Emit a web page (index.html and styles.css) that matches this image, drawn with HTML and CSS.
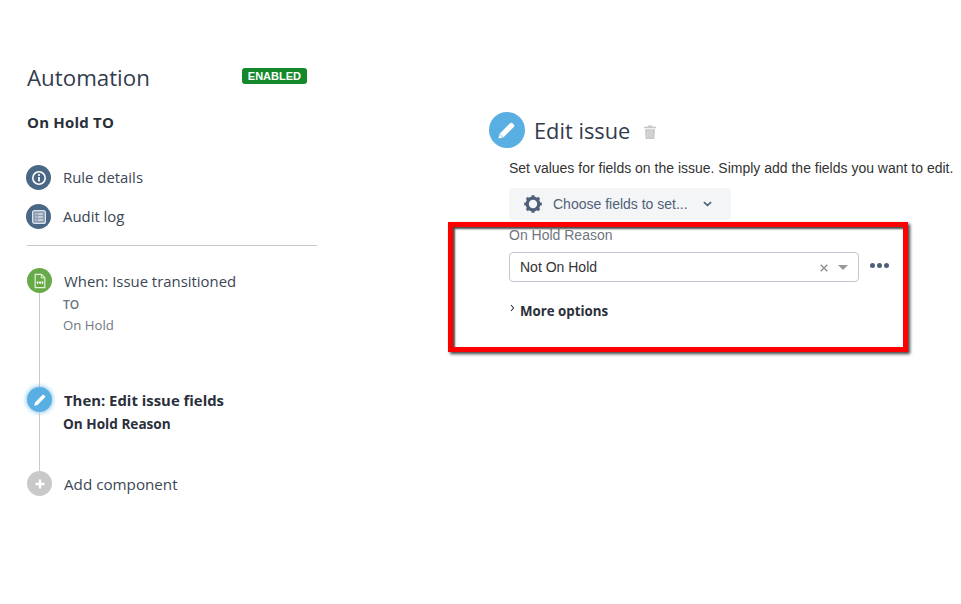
FILE: index.html
```html
<!DOCTYPE html>
<html lang="en">
<head>
<meta charset="utf-8">
<title>Automation</title>
<link rel="stylesheet" href="styles.css">
</head>
<body>
<div class="page">
  <aside class="sidebar">
    <div class="brand">
      <h1 class="title">Automation</h1>
      <span class="badge">ENABLED</span>
    </div>
    <div class="rule-name">On Hold TO</div>
    <nav class="nav">
      <div class="nav-item">
        <span class="circle navy">
          <svg viewBox="0 0 16 16" width="16" height="16"><circle cx="8" cy="8" r="6.2" fill="none" stroke="#fff" stroke-width="1.6"/><rect x="7.1" y="7" width="1.8" height="4.4" fill="#fff"/><circle cx="8" cy="5" r="1.1" fill="#fff"/></svg>
        </span>
        <span class="nav-text">Rule details</span>
      </div>
      <div class="nav-item">
        <span class="circle navy">
          <svg viewBox="0 0 16 16" width="16" height="16"><rect x="1.6" y="1.6" width="12.8" height="12.8" rx="2" fill="#8c9db3" stroke="#dfe5ec" stroke-width="1.2"/><path d="M4.4 5h1.2M4.4 8h1.2M4.4 11h1.2M6.8 5h5M6.8 8h5M6.8 11h5" stroke="#fff" stroke-width="1.1"/></svg>
        </span>
        <span class="nav-text">Audit log</span>
      </div>
    </nav>
    <div class="divider"></div>
    <div class="steps">
      <div class="step step-when">
        <div class="rail">
          <span class="tick"></span>
          <span class="circle green">
            <svg viewBox="0 0 16 16" width="16" height="16"><path d="M3.2 1.4h6.3l3.3 3.3v9.9H3.2z" fill="none" stroke="#e4f1dc" stroke-width="1.2"/><path d="M9.3 1.6v3.3h3.3" fill="none" stroke="#e4f1dc" stroke-width="1"/><path d="M4.6 9.6h2M5.6 8.2v2.8M7 9.6h1.6M8.1 8.2v2.8M9.4 9.6h2M10.4 8.2v2.8" stroke="#fff" stroke-width="1"/></svg>
          </span>
          <span class="line"></span>
        </div>
        <div class="step-body">
          <div class="step-title">When: Issue transitioned</div>
          <div class="sub-label">TO</div>
          <div class="sub-value">On Hold</div>
        </div>
      </div>
      <div class="step step-then">
        <div class="rail">
          <span class="line line-fixed"></span>
          <span class="circle blue glow">
            <svg viewBox="0 0 16 16" width="16" height="16"><path d="M2.2 13.8l.8-3.3 7.4-7.4a1.2 1.2 0 0 1 1.7 0l.8.8a1.2 1.2 0 0 1 0 1.7l-7.4 7.4z" fill="#fff"/></svg>
          </span>
          <span class="line"></span>
        </div>
        <div class="step-body">
          <div class="step-title strong">Then: Edit issue fields</div>
          <div class="sub-strong">On Hold Reason</div>
        </div>
      </div>
      <div class="step step-add">
        <div class="rail">
          <span class="line line-fixed"></span>
          <span class="circle grey">
            <svg viewBox="0 0 16 16" width="16" height="16"><path d="M8 3.5v9M3.5 8h9" stroke="#fff" stroke-width="2.4"/></svg>
          </span>
          <span class="tick"></span>
        </div>
        <div class="step-body">
          <div class="step-title wide">Add component</div>
        </div>
      </div>
    </div>
  </aside>

  <main class="panel">
    <div class="panel-head">
      <span class="circle blue big">
        <svg viewBox="0 0 16 16" width="22" height="22"><path d="M1.8 14.2l.8-3.5 7.6-7.6a1.3 1.3 0 0 1 1.8 0l.9.9a1.3 1.3 0 0 1 0 1.8l-7.6 7.6z" fill="#fff"/><path d="M2.6 11l2.4 2.4" stroke="#5aafe4" stroke-width=".6"/></svg>
      </span>
      <h2 class="panel-title">Edit issue</h2>
      <svg class="trash" viewBox="0 0 12 14" width="12" height="14"><path d="M4 .5h4l.6 1.2H12v1.6H0V1.7h3.4z" fill="#c8c8c8"/><path d="M1 4.2h10l-.7 9.8H1.7z" fill="#c8c8c8"/><path d="M3.8 5.5v7M6 5.5v7M8.2 5.5v7" stroke="#e9e9e9" stroke-width=".7"/></svg>
    </div>
    <div class="panel-body">
      <p class="desc">Set values for fields on the issue. Simply add the fields you want to edit.</p>
      <button class="choose" type="button">
        <svg viewBox="0 0 20 20" width="20" height="20"><circle cx="10" cy="10" r="5.8" fill="none" stroke="#505f79" stroke-width="3.2"/><path d="M10 1.2v3M10 15.8v3M1.2 10h3M15.8 10h3M3.8 3.8l2.1 2.1M14.1 14.1l2.1 2.1M3.8 16.2l2.1-2.1M14.1 5.9l2.1-2.1" stroke="#505f79" stroke-width="3"/></svg>
        <span class="choose-text">Choose fields to set...</span>
        <svg viewBox="0 0 10 6" width="9" height="6"><path d="M1 1l4 3.6L9 1" fill="none" stroke="#505f79" stroke-width="1.8"/></svg>
      </button>
      <div class="field-label">On Hold Reason</div>
      <div class="field-row">
        <div class="select">
          <span class="select-value">Not On Hold</span>
          <svg class="clear" viewBox="0 0 8 8" width="8" height="8"><path d="M.7.7l6.6 6.6M7.3.7L.7 7.3" stroke="#8a8a8a" stroke-width="1.3"/></svg>
          <span class="caret"></span>
        </div>
        <div class="dots"><span></span><span></span><span></span></div>
      </div>
      <div class="more">
        <svg viewBox="0 0 5 8" width="5" height="8"><path d="M1 1l2.6 3L1 7" fill="none" stroke="#333" stroke-width="1.1"/></svg>
        <span>More options</span>
      </div>
    </div>
  </main>
</div>
<div class="annotation"></div>
</body>
</html>
```
FILE: styles.css
```css
* { box-sizing: border-box; }
html, body { margin: 0; padding: 0; background: #fff; }
body {
  width: 961px;
  height: 604px;
  overflow: hidden;
  position: relative;
  font-family: "Open Sans", "Noto Sans", sans-serif;
  color: #2c3442;
}
.page { display: flex; align-items: flex-start; }

.circle {
  display: flex;
  align-items: center;
  justify-content: center;
  width: 25px;
  height: 25px;
  border-radius: 50%;
  flex: none;
}
.navy { background: #4a6785; }
.green { background: #67ab49; }
.blue { background: #59afe1; }
.grey { background: #c9c9c9; }
.glow { box-shadow: 0 0 4px 1px rgba(89, 175, 225, .65); }
.big { width: 36px; height: 36px; }

.sidebar { width: 290px; margin-left: 27px; padding-top: 63px; flex: none; }
.brand { display: flex; align-items: flex-start; justify-content: space-between; padding-right: 10px; }
.title { margin: 0; font-size: 22.3px; font-weight: 400; line-height: 30px; color: #333c4d; }
.badge {
  margin-top: 5px;
  background: #14892c;
  color: #fff;
  border-radius: 3px;
  font-family: "Liberation Sans", sans-serif;
  font-size: 11px;
  font-weight: 700;
  line-height: 16px;
  height: 16px;
  padding: 0 6px;
}
.rule-name { margin-top: 19px; font-size: 15px; font-weight: 700; line-height: 20px; letter-spacing: .2px; color: #2a2f3a; }
.nav { margin-top: 33px; margin-left: -1px; display: flex; flex-direction: column; gap: 14px; }
.nav-item { display: flex; align-items: center; gap: 12px; font-size: 14.9px; height: 25px; color: #3c4656; }
.nav-text { margin-top: -2px; }
.divider { margin-top: 16px; height: 1px; background: #c8c8c8; }

.steps { margin-top: 21px; }
.step { display: flex; gap: 12px; }
.step-when { height: 114px; }
.step-then { height: 89px; }
.step-add { height: 30px; }
.rail { width: 25px; flex: none; display: flex; flex-direction: column; align-items: center; }
.line { flex: 1; width: 1px; background: #c6c9ce; }
.line-fixed { flex: none; height: 6px; }
.step-add .line-fixed { height: 1px; }
.tick { height: 1px; width: 1px; flex: none; }
.step-body { padding-top: 2px; }
.step-title { font-size: 14.9px; line-height: 24px; color: #3c4656; }
.step-title.wide { font-size: 15.2px; }
.step-then .step-body { padding-top: 7px; }
.step-add .step-body { padding-top: 2px; }
.step-title.strong { font-weight: 700; color: #2a2f3a; }
.sub-label { margin-left: -1px; margin-top: 1px; font-size: 12px; line-height: 22px; font-weight: 600; color: #6b7280; }
.sub-value { margin-left: -1px; font-size: 13.2px; line-height: 19px; color: #6f7782; }
.sub-strong { margin-left: -1px; font-size: 13.6px; line-height: 24px; font-weight: 700; color: #2a2f3a; }

.panel { margin-left: 172px; padding-top: 112px; width: 472px; flex: none; }
.panel-head { display: flex; align-items: center; height: 36px; }
.panel-title { margin: 2px 0 0 9px; font-size: 21.8px; font-weight: 400; line-height: 36px; color: #333c4d; }
.trash { margin-left: 14px; margin-top: 3px; }
.panel-body { padding-left: 20px; }
.desc {
  margin: 10px 0 0;
  font-family: "Liberation Sans", sans-serif;
  font-size: 14px;
  line-height: 20px;
  color: #333;
  white-space: nowrap;
}
.choose {
  margin-top: 10px;
  display: flex;
  align-items: center;
  width: 222px;
  height: 32px;
  padding: 0 0 0 14px;
  border: 0;
  border-radius: 4px;
  background: #f4f5f7;
  font-family: "Liberation Sans", sans-serif;
  font-size: 14px;
  color: #505f79;
}
.choose-text { margin-left: 10px; margin-right: 15px; white-space: nowrap; }
.field-label {
  margin-top: 7px;
  font-family: "Liberation Sans", sans-serif;
  font-size: 14px;
  line-height: 16px;
  color: #707680;
}
.field-row { margin-top: 9px; display: flex; align-items: center; }
.select {
  display: flex;
  align-items: center;
  width: 350px;
  height: 30px;
  padding: 0 10px 0 10px;
  border: 1px solid #c1c7d0;
  border-radius: 4px;
  font-family: "Liberation Sans", sans-serif;
  font-size: 14px;
  color: #333;
}
.select-value { flex: 1; }
.clear { margin-right: 10px; margin-top: 2px; }
.caret { width: 0; height: 0; border-left: 5px solid transparent; border-right: 5px solid transparent; border-top: 5px solid #999; }
.dots { margin-left: 11px; margin-top: -3px; display: flex; gap: 2px; }
.dots span { width: 5px; height: 5px; border-radius: 50%; background: #505f79; }
.more { margin-top: 18px; display: flex; align-items: center; height: 22px; font-size: 13.3px; font-weight: 700; color: #2a2f3a; }
.more svg { margin-left: 1px; margin-right: 5px; margin-top: -6px; }

.annotation {
  position: absolute;
  left: 448px;
  top: 222px;
  width: 460px;
  height: 130px;
  border: 5px solid #ff0000;
  box-shadow: 2px 2px 3px rgba(0, 0, 0, .75), inset 2px 2px 2px rgba(0, 0, 0, .7);
}
```
